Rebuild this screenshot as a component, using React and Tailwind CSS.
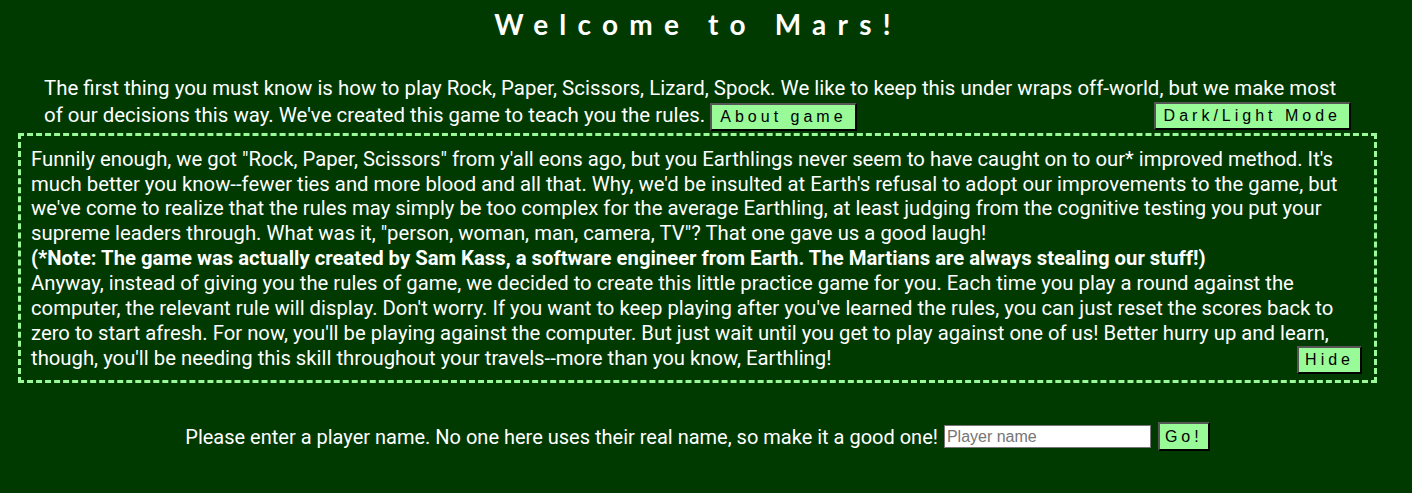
const btn =
  "bg-[#98fb98] text-black text-[16px] tracking-[4px] px-2 h-[28px] leading-none border-2 border-t-[#555] border-l-[#555] border-b-black border-r-black [font-family:'Liberation_Sans',Arial,sans-serif]";

export default function App() {
  return (
    <div className="min-h-[493px] bg-[#003a00] text-white [font-family:Roboto,'Liberation_Sans',sans-serif]">
      <h1 className="pt-[6px] pr-[16px] text-center text-[28px] font-bold tracking-[11.2px] leading-[36px] [font-family:Lato,sans-serif]">
        Welcome to Mars!
      </h1>

      <div className="pl-[44px] pr-[61px] mt-[33px] text-[20.45px] leading-[27px] flow-root">
        The first thing you must know is how to play Rock, Paper, Scissors, Lizard, Spock. We like to keep this under
        wraps off-world, but we make most of our decisions this way. We've created this game to teach you the rules.{" "}
        <button className={`${btn} align-middle`}>About game</button>
        <button className={`${btn} float-right`}>Dark/Light Mode</button>
      </div>

      <div className="ml-[18px] mr-[35px] mt-[2px] border-[3px] border-dashed border-[#98fb98] px-[10px] pt-[11px] pb-[6px] text-[20.3px] leading-[24.9px] flow-root">
        <p>
          Funnily enough, we got "Rock, Paper, Scissors" from y'all eons ago, but you Earthlings never seem to have caught
          on to our* improved method. It's much better you know--fewer ties and more blood and all that. Why, we'd be
          insulted at Earth's refusal to adopt our improvements to the game, but we've come to realize that the rules may
          simply be too complex for the average Earthling, at least judging from the cognitive testing you put your supreme
          leaders through. What was it, "person, woman, man, camera, TV"? That one gave us a good laugh!
        </p>
        <p className="font-bold">
          (*Note: The game was actually created by Sam Kass, a software engineer from Earth. The Martians are always
          stealing our stuff!)
        </p>
        <p>
          Anyway, instead of giving you the rules of game, we decided to create this little practice game for you. Each
          time you play a round against the computer, the relevant rule will display. Don't worry. If you want to keep
          playing after you've learned the rules, you can just reset the scores back to zero to start afresh. For now,
          you'll be playing against the computer. But just wait until you get to play against one of us! Better hurry up
          and learn, though, you'll be needing this skill throughout your travels--more than you know, Earthling!
          <button className={`${btn} float-right mr-[2px] px-[6px]`}>Hide</button>
        </p>
      </div>

      <div className="mt-[39px] pr-[17px] flex items-center justify-center text-[20px]">
        <span>Please enter a player name. No one here uses their real name, so make it a good one!</span>
        <input
          placeholder="Player name"
          className="ml-[6px] w-[207px] h-[23px] bg-white text-black text-[16px] px-[2px] border border-[#767676] placeholder:text-[#757575] [font-family:'Liberation_Sans',Arial,sans-serif] outline-none"
        />
        <button className={`${btn} ml-[7px] h-[29px] px-[5px]`}>Go!</button>
      </div>
    </div>
  );
}
